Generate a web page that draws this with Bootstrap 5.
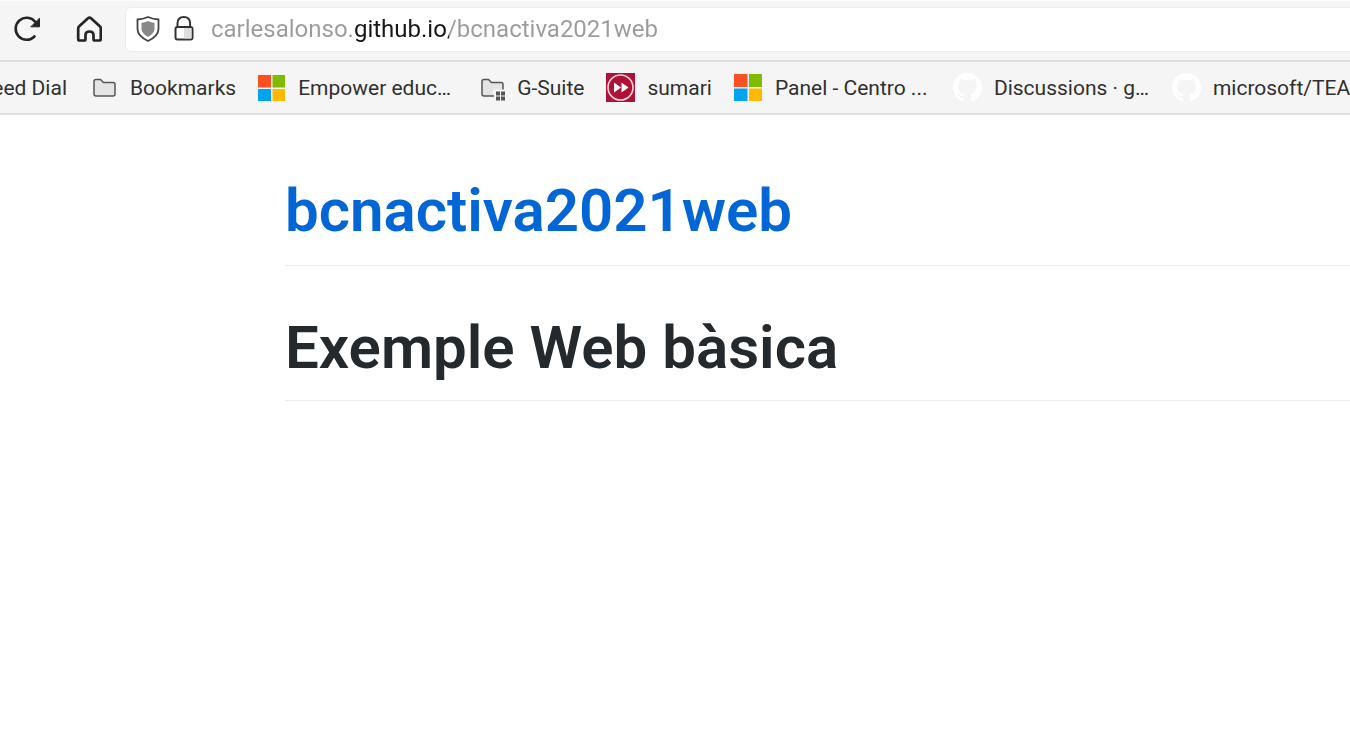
<!DOCTYPE html>
<html lang="ca">
<head>
<meta charset="utf-8">
<meta name="viewport" content="width=device-width, initial-scale=1">
<title>bcnactiva2021web</title>
<link href="https://cdn.jsdelivr.net/npm/bootstrap@5.3.0/dist/css/bootstrap.min.css" rel="stylesheet">
<style>
  body { font-family: Inter, "Liberation Sans", sans-serif; color: #24292e; overflow-x: hidden; }
  .chrome-bar { background: #f5f5f5; border-bottom: 2px solid #dedede; }
  .toolbar-row { height: 62px; padding: 7px 0 10px 10px; border-top: 1px solid #fcfcfc; }
  .tool-btn { width: 34px; height: 44px; }
  .url-box { height: 45px; margin-left: 23px; padding-left: 9px; background: #fff; border: 1px solid #ececec; border-right: 0; border-radius: 6px 0 0 6px; }
  .url-input {
    font-family: Roboto, sans-serif; font-size: 24px; line-height: 30px; color: #999; margin-left: 14px;
    background: linear-gradient(90deg, #9b9b9b 143px, #161616 143px 238px, #9b9b9b 238px);
    -webkit-background-clip: text; background-clip: text; -webkit-text-fill-color: transparent;
  }
  .bookmarks-row { height: 53px; gap: 22px; font-family: Roboto, sans-serif; font-size: 21px; line-height: 28px; overflow: hidden; }
  .bookmark { gap: 12px; color: #303030; white-space: nowrap; }
  .cut-start { width: 67px; overflow: hidden; }
  .cut-label { width: 156px; }
  .page-main { padding: 60px 0 60px 285px; }
  .page-main h1 { font-family: Roboto, sans-serif; font-size: 60px; line-height: 72px; font-weight: 600; margin: 0; border-bottom: 1px solid #eaecef; }
  .site-title { padding-bottom: 18px; }
  .page-main .page-title { margin-top: 46px; padding-bottom: 16px; }
  .site-title a { color: #0366d6; }
</style>
<script src="https://cdn.jsdelivr.net/npm/bootstrap@5.3.0/dist/js/bootstrap.bundle.min.js"></script>
</head>
<body>
<svg class="d-none" aria-hidden="true">
  <symbol id="ms" viewBox="0 0 29 29"><path fill="#fa5022" d="M0 1h13.500v13H0z"/><path fill="#80bb01" d="M15 1h13v13H15z"/><path fill="#02a4f0" d="M0 15.500h13.500V28H0z"/><path fill="#ffb901" d="M15 15.500h13V28H15z"/></symbol>
  <symbol id="gh" viewBox="0 0 16 16"><path fill="#fff" d="M8 0C3.580 0 0 3.580 0 8c0 3.540 2.290 6.530 5.470 7.590.4.070.55-.17.55-.38 0-.19-.01-.82-.01-1.490-2.010.37-2.530-.49-2.690-.94-.09-.23-.48-.94-.82-1.130-.28-.15-.68-.52-.01-.53.63-.01 1.080.58 1.230.82.72 1.210 1.870.87 2.330.66.07-.52.28-.87.51-1.070-1.780-.2-3.640-.89-3.640-3.950 0-.87.31-1.590.82-2.150-.08-.2-.36-1.020.08-2.120 0 0 .67-.21 2.200.82.64-.18 1.320-.27 2-.27s1.360.09 2 .27c1.530-1.040 2.200-.82 2.200-.82.44 1.100.16 1.920.08 2.120.51.56.82 1.270.82 2.150 0 3.070-1.870 3.750-3.650 3.950.29.25.54.73.54 1.480 0 1.070-.01 1.930-.01 2.200 0 .21.15.46.55.38A8 8 0 0 0 8 0"/></symbol>
</svg>
<header>
  <div class="chrome-bar toolbar-row d-flex align-items-center">
    <button class="tool-btn btn p-0 border-0 d-flex align-items-center justify-content-center" type="button" aria-label="Reload">
      <svg width="34" height="34" viewBox="0 0 34 34" fill="none" stroke="#252525" stroke-width="2.600" stroke-linecap="round"><path d="M24.500 24.500A11 11 0 1 1 25.200 9.800"/><path d="M29.500 6.500v8.300h-8.300z" fill="#252525" stroke-width="1" stroke-linejoin="round"/></svg>
    </button>
    <button class="tool-btn btn p-0 border-0 d-flex align-items-center justify-content-center ms-4" type="button" aria-label="Home">
      <svg width="34" height="34" viewBox="0 0 34 34" fill="none" stroke="#252525" stroke-width="2.700" stroke-linejoin="round"><path d="M10.200 16.500Q10.200 15 11.500 14L20 6.200Q21.500 5 23 6.200L31.500 14Q32.800 15 32.800 16.500V27q0 1.500-1.500 1.500H27q-1.500 0-1.500-1.500v-4q0-3.500-4-3.500t-4 3.500v4q0 1.500-1.500 1.500h-4.300q-1.500 0-1.500-1.500z"/></svg>
    </button>
    <div class="url-box d-flex align-items-center flex-grow-1">
      <svg class="flex-shrink-0" width="26" height="30" viewBox="0 0 26 30"><path d="M13 3Q18 5.200 23.500 5.500V15q0 7-10.500 12Q2.500 22 2.500 15V5.500Q8 5.200 13 3z" fill="#fff" stroke="#444" stroke-width="1.800"/><path d="M13 7Q16 8.500 19.500 8.700V15q0 4-6.500 8-6.500-4-6.500-8V8.700Q10 8.500 13 7z" fill="#888"/></svg>
      <svg class="flex-shrink-0 ms-2" width="28" height="30" viewBox="0 0 28 30"><path d="M8.500 13V9.500q0-6.500 6.300-6.500t6.300 6.500V13" fill="none" stroke="#333" stroke-width="2"/><rect x="6.500" y="13" width="17" height="12.500" rx="2" fill="#fff" stroke="#333" stroke-width="2"/><path d="M15 14h7.500v10.500H15z" fill="#ddd"/></svg>
      <input class="url-input border-0 p-0 flex-grow-1" type="text" aria-label="Address" value="carlesalonso.github.io/bcnactiva2021web">
    </div>
  </div>
  <nav class="chrome-bar bookmarks-row d-flex align-items-center" aria-label="Bookmarks">
    <a class="bookmark cut-start flex-shrink-0 d-flex justify-content-end text-decoration-none" href="#">Speed Dial</a>
    <a class="bookmark flex-shrink-0 d-flex align-items-center text-decoration-none" href="#">
      <svg width="29" height="29" viewBox="0 0 29 29"><path d="M5 21V8.500q0-2 2-2h4.500l3 3H24q2 0 2 2V21q0 2-2 2H7q-2 0-2-2z" fill="#e4e4e4" stroke="#555" stroke-width="1.500"/></svg>
      <span>Bookmarks</span></a>
    <a class="bookmark flex-shrink-0 d-flex align-items-center text-decoration-none" href="#">
      <svg width="28" height="28"><use href="#ms"/></svg><span class="cut-label">Empower educ…</span></a>
    <a class="bookmark flex-shrink-0 d-flex align-items-center text-decoration-none" href="#">
      <svg width="29" height="29" viewBox="0 0 29 29"><path d="M17 23H8q-2 0-2-2V8.500q0-2 2-2h4.500l3 3H25q2 0 2 2v5h-10z" fill="#e4e4e4"/><path d="M18 23H8q-2 0-2-2V8.500q0-2 2-2h4.500l3 3H25q2 0 2 2v5" fill="none" stroke="#555" stroke-width="1.500"/><path d="M20 18.500h4v4h-4zM25 18.500h4v4h-4zM20 23.500h4v4h-4zM25 23.500h4v4h-4z" fill="#555"/></svg>
      <span>G-Suite</span></a>
    <a class="bookmark flex-shrink-0 d-flex align-items-center text-decoration-none" href="#">
      <svg width="29" height="29" viewBox="0 0 29 29"><path fill="#b01136" d="M0 0h29v29H0z"/><circle cx="14.500" cy="14.500" r="12.500" fill="none" stroke="#f6d5dd" stroke-width="1.600"/><path fill="#fff" d="M8 9.500l7 5-7 5zM15.500 9.500l7 5-7 5z"/></svg>
      <span>sumari</span></a>
    <a class="bookmark flex-shrink-0 d-flex align-items-center text-decoration-none" href="#">
      <svg width="29" height="29"><use href="#ms"/></svg><span class="cut-label">Panel - Centro ...</span></a>
    <a class="bookmark flex-shrink-0 d-flex align-items-center text-decoration-none" href="#">
      <svg width="29" height="29"><use href="#gh"/></svg><span class="cut-label">Discussions · g…</span></a>
    <a class="bookmark flex-shrink-0 d-flex align-items-center text-decoration-none" href="#">
      <svg width="29" height="29"><use href="#gh"/></svg><span>microsoft/TEA</span></a>
  </nav>
</header>
<main class="page-main">
  <h1 class="site-title"><a class="text-decoration-none" href="#">bcnactiva2021web</a></h1>
  <h1 class="page-title">Exemple Web bàsica</h1>
</main>
</body>
</html>
